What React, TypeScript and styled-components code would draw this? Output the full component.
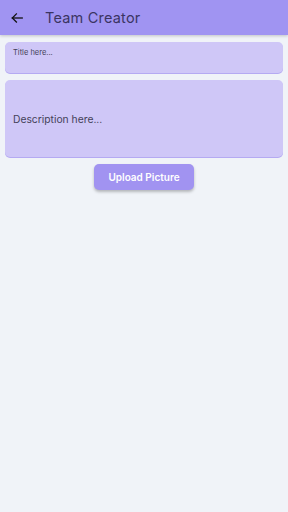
import styled, { createGlobalStyle } from "styled-components";

const Global = createGlobalStyle`
    html, body {
        margin: 0;
        padding: 0;
        background-color: #f0f3f8;
        font-family: "Inter", "Open Sans", sans-serif;
    }
`;

const App = () => {
    return (
        <>
            <Global />
            <Page>
                <Header>
                    <BackButton aria-label="back">
                        <svg width="14" height="14" viewBox="0 0 24 24" fill="none" stroke="#111" strokeWidth="2.2" strokeLinecap="square">
                            <path d="M21 12H4" />
                            <path d="M11 5l-7 7 7 7" />
                        </svg>
                    </BackButton>
                    <Title>Team Creator</Title>
                </Header>

                <Form>
                    <Field $height={31} $align="top">
                        <Placeholder $size={7.5}>Title here...</Placeholder>
                    </Field>
                    <Field $height={77} $align="center">
                        <Placeholder $size={10.3}>Description here...</Placeholder>
                    </Field>
                    <UploadButton>Upload Picture</UploadButton>
                </Form>
            </Page>
        </>
    );
};

const Page = styled.div`
    width: 288px;
    min-height: 512px;
    background-color: #f0f3f8;
`;

const Header = styled.div`
    height: 35px;
    display: flex;
    align-items: center;
    background-color: #a094f2;
    box-shadow: 0 1px 3px #00000033;
`;

const BackButton = styled.div`
    width: 34px;
    display: flex;
    justify-content: center;
`;

const Title = styled.h1`
    margin: 0 0 0 11px;
    font-size: 14.5px;
    font-weight: 400;
    color: #3b3462;
    letter-spacing: 0.2px;
`;

const Form = styled.div`
    display: flex;
    flex-direction: column;
    align-items: center;
    gap: 7px;
    padding: 7px 5px;
`;

const Field = styled.div<{ $height: number; $align: "top" | "center" }>`
    box-sizing: border-box;
    width: 100%;
    height: ${(p) => p.$height}px;
    background-color: #cfc7f7;
    border-radius: 5px;
    box-shadow: 0 1px 0 #b5aaf2;
    padding: ${(p) => (p.$align === "top" ? "6px 8px" : "0 8px")};
    display: flex;
    align-items: ${(p) => (p.$align === "top" ? "flex-start" : "center")};
`;

const Placeholder = styled.span<{ $size: number }>`
    font-size: ${(p) => p.$size}px;
    color: #45425a;
`;

const UploadButton = styled.button`
    width: 100px;
    height: 26px;
    border: none;
    border-radius: 5px;
    background-color: #a193f1;
    color: #fff;
    font-family: "Inter", sans-serif;
    font-size: 10px;
    font-weight: 600;
    box-shadow: 0 2px 3px #00000040;
`;

export default App;
